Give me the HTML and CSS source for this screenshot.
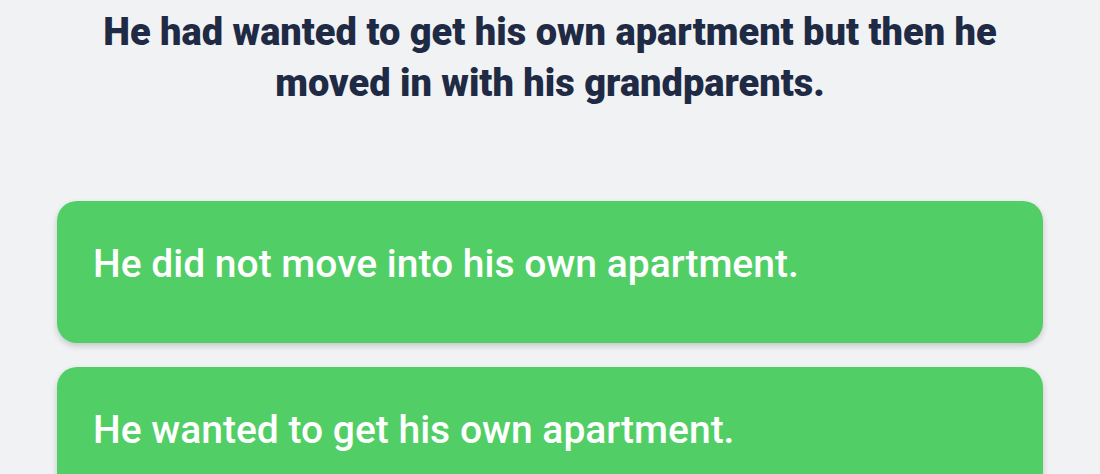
FILE: index.html
```html
<!DOCTYPE html>
<html lang="en">
<head>
<meta charset="utf-8">
<link rel="stylesheet" href="styles.css">
</head>
<body>
<main class="quiz">
  <h1 class="prompt">He had wanted to get his own apartment but then he moved in with his grandparents.</h1>
  <div class="options">
    <button class="option">He did not move into his own apartment.</button>
    <button class="option">He wanted to get his own apartment.</button>
  </div>
</main>
</body>
</html>
```
FILE: styles.css
```css
html, body {
  margin: 0;
  padding: 0;
  background: #f1f2f4;
  font-family: Roboto, "Liberation Sans", sans-serif;
}
.quiz {
  display: flex;
  flex-direction: column;
  align-items: center;
  padding: 7px 57px 0;
}
.prompt {
  max-width: 900px;
  margin: 0;
  text-align: center;
  font-size: 38px;
  font-weight: 900;
  line-height: 51px;
  color: #1f2a44;
}
.options {
  align-self: stretch;
  display: flex;
  flex-direction: column;
  gap: 24px;
  margin-top: 92px;
}
.option {
  display: block;
  width: 100%;
  height: 142px;
  border: none;
  border-radius: 20px;
  background: #51cf66;
  color: #fff;
  font-family: Roboto, "Liberation Sans", sans-serif;
  font-size: 39px;
  font-weight: 500;
  text-align: left;
  padding: 0 36px 16px;
  box-shadow: 0 3px 6px rgba(0,0,0,0.18);
  cursor: pointer;
}
```
